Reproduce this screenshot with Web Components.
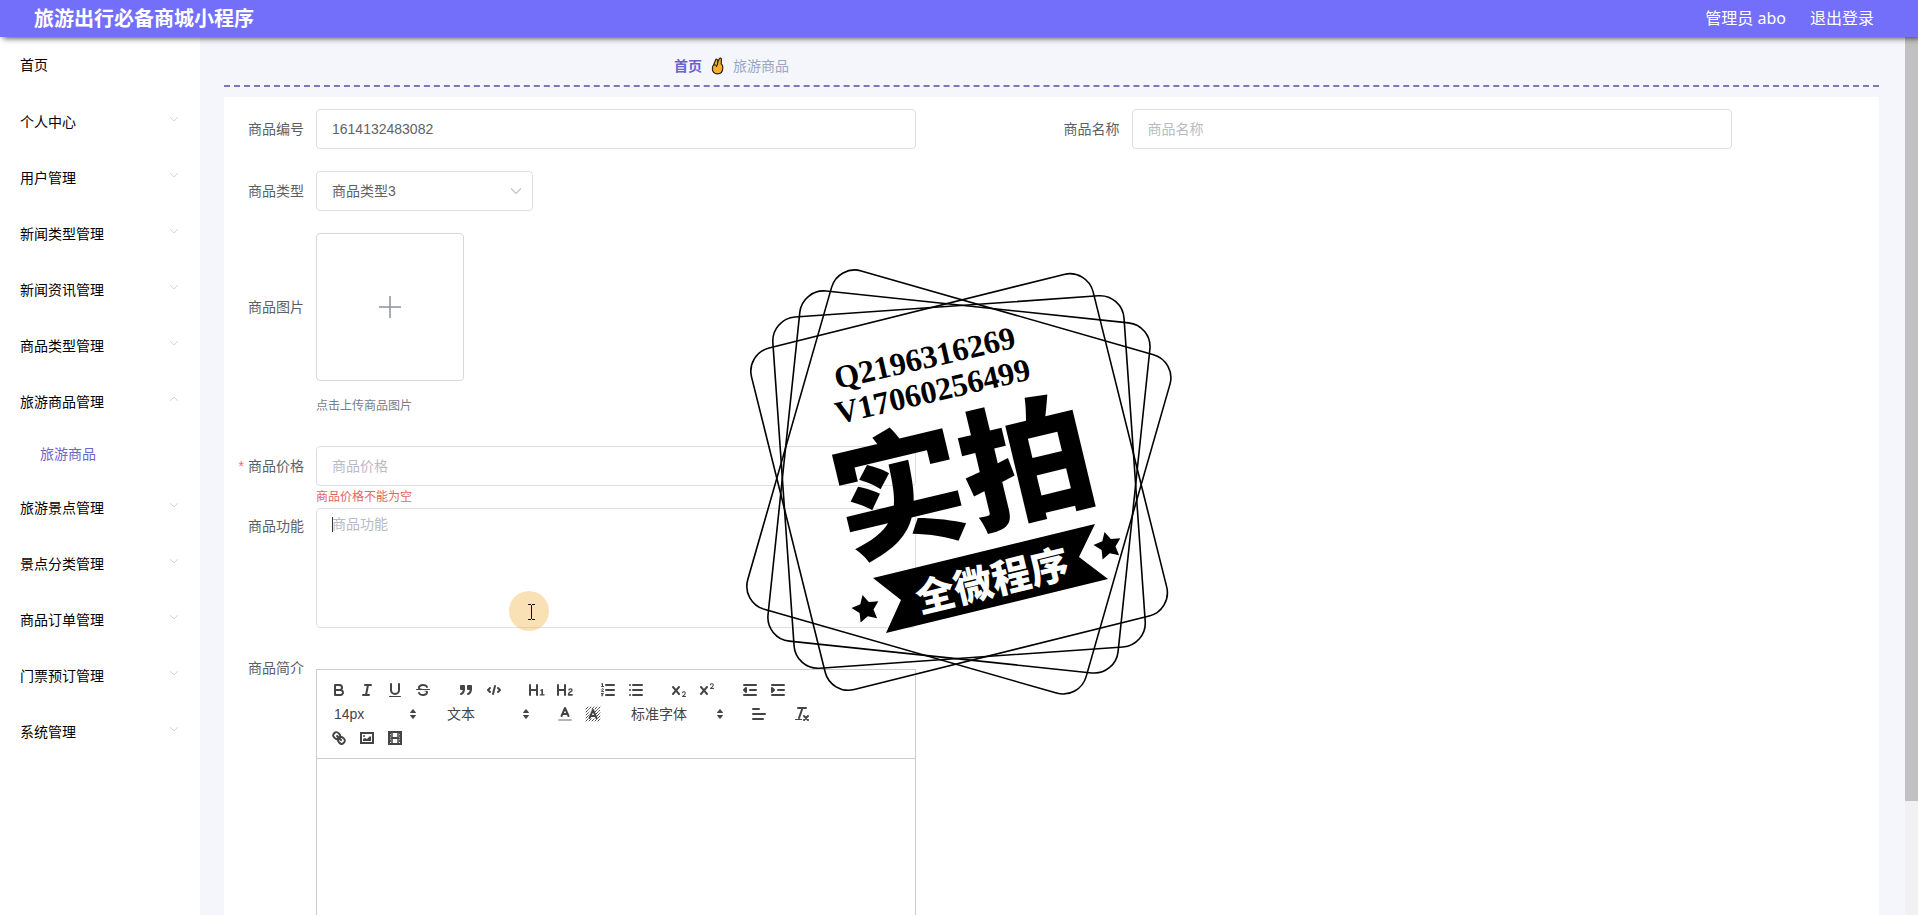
<!DOCTYPE html>
<html lang="zh-CN">
<head>
<meta charset="utf-8">
<title>旅游出行必备商城小程序</title>
<style>
  html, body { margin: 0; height: 100%; }
  body {
    font: 14px/20px "Liberation Sans", "Noto Sans CJK SC", sans-serif;
    color: #000;
    background: #f5f6fb;
    overflow: hidden;
  }
</style>
</head>
<body>
<admin-shell></admin-shell>

<template id="t-shell">
  <style>
    :host { display: grid; grid-template: auto minmax(0, 1fr) / 200px minmax(0, 1fr) auto; height: 100vh; position: relative; overflow: hidden; }
    app-header { grid-column: 1 / -1; z-index: 1; }
    main { padding: 10px 26px 0 24px; overflow: hidden; }
  </style>
  <app-header name="旅游出行必备商城小程序"></app-header>
  <side-menu>
    <menu-item label="首页" leaf></menu-item>
    <menu-item label="个人中心"></menu-item>
    <menu-item label="用户管理"></menu-item>
    <menu-item label="新闻类型管理"></menu-item>
    <menu-item label="新闻资讯管理"></menu-item>
    <menu-item label="商品类型管理"></menu-item>
    <menu-item label="旅游商品管理" open><sub-item>旅游商品</sub-item></menu-item>
    <menu-item label="旅游景点管理"></menu-item>
    <menu-item label="景点分类管理"></menu-item>
    <menu-item label="商品订单管理"></menu-item>
    <menu-item label="门票预订管理"></menu-item>
    <menu-item label="系统管理"></menu-item>
  </side-menu>
  <main>
    <bread-crumb></bread-crumb>
    <product-form></product-form>
  </main>
  <scroll-track></scroll-track>
  <stamp-mark></stamp-mark>
</template>

<template id="t-header">
  <style>
    :host { display: flex; justify-content: space-between; align-items: center; height: 37px; padding: 0 44px 0 34px; background: #736ffa; color: #fff; box-shadow: 3px 1px 6px rgba(0,0,0,.75); font-family: "Noto Sans", "Noto Sans CJK SC", sans-serif; }
    h1 { margin: 0; font-size: 20px; line-height: 36px; font-weight: 700; }
    div { display: flex; gap: 24px; padding-bottom: 2px; font-size: 16px; line-height: 34px; }
    a { color: inherit; text-decoration: none; }
  </style>
  <h1></h1>
  <div><span>管理员 abo</span><a href="#logout">退出登录</a></div>
</template>

<template id="t-side">
  <style>
    :host { display: block; background: #fff; overflow: hidden; }
  </style>
  <nav><slot></slot></nav>
</template>

<template id="t-item">
  <style>
    :host { display: block; }
    button { display: flex; justify-content: space-between; align-items: center; width: 100%; height: 56px; padding: 0 20px; border: 0; background: none; font: inherit; color: #000; text-align: left; }
    :host([leaf]) button { height: 57px; padding-bottom: 2px; }
    svg { width: 12px; height: 12px; margin-bottom: 6px; fill: none; stroke: #d4d6da; }
    :host([open]) svg { transform: rotate(180deg); }
    :host([leaf]) svg { display: none; }
  </style>
  <button type="button"><span></span><svg viewBox="0 0 12 12"><path d="M2 4l4 4 4-4"/></svg></button>
  <slot></slot>
</template>

<template id="t-sub">
  <style>
    :host { display: block; }
    a { display: block; padding: 0 0 2px 40px; line-height: 48px; color: #6f66c4; text-decoration: none; }
  </style>
  <a href="#goods"><slot></slot></a>
</template>

<template id="t-crumb">
  <style>
    :host { display: block; border-bottom: 2px dashed #7b78b2; margin-bottom: 10px; padding-left: 450px; }
    nav { display: flex; align-items: center; gap: 9px; height: 38px; }
    a { color: #6a62cf; font-weight: 700; text-decoration: none; }
    span { color: #97a8be; }
    svg { width: 13px; height: 18px; }
  </style>
  <nav aria-label="breadcrumb">
    <a href="#home">首页</a>
    <svg viewBox="0 0 13 18" fill="#f7ae2b" stroke="#2d2316" stroke-width="1.2" stroke-linejoin="round"><path d="M2.600 8L4.600 3c.5-1.300 2-.9 2 .4l.2 1.700L8.300 1.800c.6-1.300 2.300-.6 2.100.7L10.200 7c1.300.6 1.700 1.800 1.600 3.700-.1 3.900-1.500 6.100-5.200 6.100-3.600 0-5.200-2-5.200-5C1.400 9.800 1.400 8.600 2.600 8z"/><path d="M2.600 8c2-.6 3 .3 3 2M6.800 5L6.400 8.500" fill="none"/></svg>
    <span>旅游商品</span>
  </nav>
</template>

<template id="t-row">
  <style>
    :host { display: flex; margin-bottom: 22px; color: #5c5f66; }
    .label { flex: none; box-sizing: border-box; width: 80px; height: 40px; padding-right: 12px; line-height: 40px; text-align: right; white-space: nowrap; }
    :host([kind=upload]) .label { height: 148px; line-height: 148px; }
    :host([kind=tall]) .label { line-height: 36px; }
    :host([required]) .label::before { content: "*"; color: #f56c6c; margin-right: 4px; }
    :host([error]) { margin-bottom: 0; }
    .content { flex: 1; min-width: 0; }
    .error { display: none; font-size: 12px; line-height: 22px; color: #e26464; }
    :host([error]) .error { display: block; }
  </style>
  <div class="label"><slot name="label"></slot></div>
  <div class="content"><slot></slot><div class="error" role="alert"></div></div>
</template>

<template id="t-form">
  <style>
    :host { display: block; background: #fff; padding: 12px; }
    form { display: grid; grid-template-columns: 1fr 1fr; }
    form-row { grid-column: 1; }
    form-row.second { grid-column: 2; }
    input, textarea, select { display: block; box-sizing: border-box; width: 600px; max-width: 100%; height: 40px; margin: 0; padding: 0 15px; border: 1px solid #dcdfe6; border-radius: 4px; background: #fff; font: inherit; color: #606266; outline: none; appearance: none; }
    textarea { height: 120px; padding: 5px 15px; line-height: 21px; resize: none; }
    ::placeholder { color: #b8bbc2; opacity: 1; }
    .select { position: relative; width: 217px; }
    .select svg { position: absolute; right: 11px; top: 14px; width: 12px; height: 12px; fill: none; stroke: #c0c4cc; stroke-width: 1.2; pointer-events: none; }
    .upload { display: flex; align-items: center; justify-content: center; width: 148px; height: 148px; padding: 0; border: 1px solid #d5d7dc; border-radius: 4px; background: #fff; }
    .upload svg { width: 24px; height: 24px; stroke: #8c939d; stroke-width: 1.500; }
    .hint { padding: 8px 0 1px; font-size: 12px; line-height: 34px; color: #75808f; }
    .area { position: relative; width: 600px; max-width: 100%; }
    .caret { position: absolute; left: 16px; top: 9px; width: 1px; height: 15px; background: #333; }
    .pointer { position: absolute; left: 193px; top: 83px; width: 40px; height: 40px; }
  </style>
  <form>
    <form-row>
      <label slot="label" for="code">商品编号</label>
      <input id="code" type="text" value="1614132483082">
    </form-row>
    <form-row class="second">
      <label slot="label" for="name">商品名称</label>
      <input id="name" type="text" placeholder="商品名称">
    </form-row>
    <form-row>
      <label slot="label" for="kind">商品类型</label>
      <div class="select">
        <select id="kind"><option>商品类型3</option></select>
        <svg viewBox="0 0 12 12"><path d="M1 3.500l5 5 5-5"/></svg>
      </div>
    </form-row>
    <form-row kind="upload">
      <label slot="label" for="photo">商品图片</label>
      <button class="upload" id="photo" type="button"><svg viewBox="0 0 24 24"><path d="M12 1v22M1 12h22"/></svg></button>
      <div class="hint">点击上传商品图片</div>
    </form-row>
    <form-row required error="商品价格不能为空">
      <label slot="label" for="price">商品价格</label>
      <input id="price" type="text" placeholder="商品价格">
    </form-row>
    <form-row kind="tall">
      <label slot="label" for="feature">商品功能</label>
      <div class="area">
        <textarea id="feature" placeholder="商品功能"></textarea>
        <span class="caret"></span>
        <svg class="pointer" viewBox="0 0 40 40"><circle cx="20" cy="20" r="20" fill="#f3b74f" fill-opacity=".42"/><path d="M19 13.500h3M23 13.500h3M19 28.500h3M23 28.500h3M22.500 14v14" fill="none" stroke="#111"/></svg>
      </div>
    </form-row>
    <form-row kind="tall">
      <span slot="label">商品简介</span>
      <rich-editor></rich-editor>
    </form-row>
  </form>
</template>

<template id="t-editor">
  <style>
    :host { display: block; width: 600px; max-width: 100%; margin-top: 19px; }
    .bar { display: flex; flex-wrap: wrap; padding: 8px; border: 1px solid #ccc; }
    .group { display: flex; margin-right: 15px; }
    .body { height: 320px; border: 1px solid #ccc; border-top: 0; padding: 12px 15px; outline: none; }
    select { appearance: none; box-sizing: border-box; width: 98px; height: 24px; border: 0; padding: 0 9px; background: none; font: inherit; color: #444; }
    .pick { display: grid; align-items: center; }
    .pick > * { grid-area: 1 / 1; }
    .pick svg { justify-self: end; width: 18px; height: 18px; margin-right: 1px; fill: #444; pointer-events: none; }
    .wide select { width: 108px; }
  </style>
  <div class="bar" role="toolbar"></div>
  <div class="body" contenteditable="true" role="textbox" aria-label="商品简介"></div>
</template>

<template id="t-tool">
  <style>
    :host { display: block; }
    button { display: block; width: 28px; height: 24px; padding: 3px 5px; border: 0; background: none; }
    svg { display: block; width: 18px; height: 18px; }
    .s { fill: none; stroke: #444; stroke-linecap: round; stroke-linejoin: round; stroke-width: 2; }
    .m { stroke-miterlimit: 10; stroke-linejoin: miter; }
    .t { stroke-width: 1; }
    .f, .sf { fill: #444; }
    .sf { stroke: #444; stroke-linecap: round; stroke-linejoin: round; stroke-width: 2; }
    .e { fill-rule: evenodd; }
    .tr { opacity: .4; }
  </style>
  <button type="button"></button>
</template>

<template id="t-scroll">
  <style>
    :host { display: block; width: 13px; background: #f1f1f1; }
    div { height: 87%; background: #c1c1c1; }
  </style>
  <div></div>
</template>

<template id="t-stamp">
  <style>
    :host { display: block; position: absolute; top: 250px; left: 50%; width: 460px; height: 460px; margin-left: -229px; pointer-events: none; z-index: 2; }
    svg { display: block; width: 460px; height: 460px; }
    .num { font: 700 32px "Liberation Serif", serif; }
    .big { font: 900 131px "Noto Sans CJK SC", sans-serif; text-anchor: middle; }
    .small { font: 900 39px "Noto Sans CJK SC", sans-serif; fill: #fff; text-anchor: middle; }
  </style>
  <svg viewBox="0 0 460 460">
    <g fill="none" stroke="#000" stroke-width="1.600">
      <rect x="53" y="56" width="352" height="352" rx="24" transform="rotate(16 229 231.500)"/>
      <rect x="53" y="56" width="352" height="352" rx="24" transform="rotate(-14 229 231.500)"/>
      <rect x="53" y="56" width="352" height="352" rx="24" transform="rotate(-4 229 231.500)"/>
      <rect x="53" y="56" width="352" height="352" rx="24" transform="rotate(6 229 231.500)"/>
    </g>
    <text class="num" transform="translate(107 139) rotate(-13)">Q2196316269</text>
    <text class="num" transform="translate(108 174) rotate(-13)">V17060256499</text>
    <text class="big" transform="translate(233 228) rotate(-13.500)" y="48">实拍</text>
    <path d="M143 328L365 274L349 307L378 329L156 383L171 350z"/>
    <text class="small" transform="translate(262 330) rotate(-13.700)" y="15">全微程序</text>
    <g>
      <path transform="translate(136 359)" d="M-3.500-14.100L2.800-7L12.300-7.700L7.500.5L11.100 9.300L1.800 7.300L-5.400 13.400L-6.400 4L-14.500-1L-5.700-4.800z"/>
      <path transform="translate(378 296)" d="M-3.500-14.100L2.800-7L12.300-7.700L7.500.5L11.100 9.300L1.800 7.300L-5.400 13.400L-6.400 4L-14.500-1L-5.700-4.800z"/>
    </g>
  </svg>
</template>

<script>
  const stamp = (host, id) => {
    const root = host.attachShadow({ mode: 'open' });
    root.append(document.getElementById(id).content.cloneNode(true));
    return root;
  };
  const define = (name, id, setup) => customElements.define(name, class extends HTMLElement {
    connectedCallback() {
      if (this.shadowRoot) return;
      const root = stamp(this, id);
      if (setup) setup(this, root);
    }
  });

  const icons = {
    bold: '<path class="s" d="M5,4H9.5A2.5,2.5,0,0,1,12,6.500v0A2.5,2.5,0,0,1,9.500,9H5V4ZM5,9h5.500A2.5,2.5,0,0,1,13,11.500v0A2.5,2.5,0,0,1,10.500,14H5V9Z"/>',
    italic: '<path class="s" d="M7 4h6M5 14h6M8 14l2-10"/>',
    underline: '<path class="s" d="M5,3V9a4.012,4.012,0,0,0,4,4H9a4.012,4.012,0,0,0,4-4V3"/><rect class="f" height="1" rx=".5" width="12" x="3" y="15"/>',
    strike: '<path class="s t" d="M15.500 8.500h-13"/><path class="f" d="M9.007,8C6.542,7.791,6,7.519,6,6.500,6,5.792,7.283,5,9,5c1.571,0,2.765.679,2.969,1.309a1,1,0,0,0,1.900-.617C13.356,4.106,11.354,3,9,3,6.200,3,4,4.538,4,6.500a3.200,3.200,0,0,0,.5,1.843ZM8.984,10C11.457,10.208,12,10.479,12,11.500c0,.708-1.283,1.500-3,1.500-1.571,0-2.765-.679-2.969-1.309a1,1,0,1,0-1.900.617C4.644,13.894,6.646,15,9,15c2.800,0,5-1.538,5-3.500a3.200,3.200,0,0,0-.5-1.843Z"/>',
    quote: '<rect class="sf" height="3" width="3" x="4" y="5"/><rect class="sf" height="3" width="3" x="11" y="5"/><path class="sf e" d="M7,8c0,4.031-3,5-3,5"/><path class="sf e" d="M14,8c0,4.031-3,5-3,5"/>',
    code: '<path class="s" d="M5 7L3 9l2 2M13 7l2 2-2 2M10 5L8 13"/>',
    h1: '<path class="f" d="M10,4V14a1,1,0,0,1-2,0V10H3v4a1,1,0,0,1-2,0V4A1,1,0,0,1,3,4V8H8V4a1,1,0,0,1,2,0Zm6.068,9.209H14.982V8.594a.542.542,0,0,0-.605-.605.622.622,0,0,0-.308.033,1.732,1.732,0,0,1-.957.500c-.6.100-1,.2-1,.7a.600.600,0,0,0,.5.600h.770v3.387h-1.100a.605.605,0,1,0,0,1.200h3.785a.605.605,0,1,0,0-1.200Z"/>',
    h2: '<path class="f" d="M16.737,13.975a.697.697,0,0,1-.710.700H12.500a1.300,1.300,0,0,1-.7-1.200c0-1.400,1-2.200,2-2.900.9-.6,1.500-.900,1.500-1.500a.75.75,0,0,0-.8-.7c-.6,0-.8.400-1,.8a.7.7,0,0,1-1.300-.4A2.200,2.200,0,0,1,14.500,7.200a2,2,0,0,1,2.200,1.900c0,1.200-.9,1.800-1.900,2.500-.6.400-1.200.8-1.400,1.300H16A.7.7,0,0,1,16.737,13.975ZM9,3A.999.999,0,0,0,8,4V8H3V4A1,1,0,0,0,1,4V14a1,1,0,0,0,2,0V10H8v4a1,1,0,0,0,2,0V4A1,1,0,0,0,9,3Z"/>',
    ordered: '<path class="s" d="M7 4h8M7 9h8M7 14h8"/><path class="s t" d="M2.500 5.500h2M3.500 5.500v-3l-1 .5M4.500 10.500h-2c0-1.500 1.850-1 1.850-2.234 0-.8-1.350-1-1.850-.234M2.500 14.850a.959.959,0,1,0,.2-1.800M2.500 12.500h1.800"/>',
    bullet: '<path class="s" d="M6 4h9M6 9h9M6 14h9M3 4h0M3 9h0M3 14h0"/>',
    sub: '<path class="f" d="M15.500,15H13.861a3.858,3.858,0,0,0,1.914-2.975,1.800,1.800,0,0,0-1.600-1.751A1.921,1.921,0,0,0,12.021,11.700a.5.5,0,1,0,.957.291h0a.914.914,0,0,1,1.053-.725.810.810,0,0,1,.744.762c0,1.076-1.170,1.869-1.936,2.430A1.456,1.456,0,0,0,12,15.500a.5.5,0,0,0,.5.500h3A.5.5,0,0,0,15.500,15Z"/><path class="f" d="M9.650,5.241a1,1,0,0,0-1.409.108L6,7.964,3.759,5.349A1,1,0,0,0,2.192,6.590l.049.061L4.684,9.500,2.241,12.349A1,1,0,0,0,3.710,13.707l.049-.056L6,11.036l2.241,2.614a1,1,0,1,0,1.567-1.240l-.049-.061L7.316,9.500,9.759,6.651A1,1,0,0,0,9.650,5.241Z"/>',
    sup: '<path class="f" d="M15.500,7H13.861a4.015,4.015,0,0,0,1.914-2.975,1.800,1.800,0,0,0-1.600-1.751A1.922,1.922,0,0,0,12.021,3.700a.5.5,0,1,0,.957.291.917.917,0,0,1,1.053-.725.810.810,0,0,1,.744.762c0,1.077-1.164,1.925-1.934,2.486A1.423,1.423,0,0,0,12,7.500a.5.5,0,0,0,.5.500h3A.5.5,0,0,0,15.500,7Z"/><path class="f" d="M9.651,5.241a1,1,0,0,0-1.410.108L6,7.964,3.759,5.349a1,1,0,1,0-1.519,1.300L4.683,9.500,2.241,12.349a1,1,0,1,0,1.519,1.300L6,11.036,8.241,13.650a1,1,0,0,0,1.519-1.300L7.317,9.500,9.759,6.651A1,1,0,0,0,9.651,5.241Z"/>',
    outdent: '<path class="s" d="M3 14h12M3 4h12M9 9h6"/><path class="sf" d="M5 7v4L3 9z"/>',
    indent: '<path class="s" d="M3 14h12M3 4h12M9 9h6"/><path class="sf" d="M3 7v4L5 9z"/>',
    color: '<path class="s tr" d="M3 15h12"/><path class="s" d="M5.500 11L9 3l3.500 8M11.630 9H6.380"/>',
    mark: '<path class="s t" stroke-dasharray="1 1" d="M2 4L4 2M2 7L7 2M2 10L5 7M2 13L5 10M2 16L4 14M5 16L7 14M8 16L10 14M11 16L16 11M14 16L16 14M13 11L16 8M12 9L16 5M11 7L16 2M11 4L13 2M8 4L10 2"/><path class="s" d="M5.500 13L9 5l3.500 8M11.630 11H6.380"/>',
    align: '<path class="s" d="M3 9h12M3 14h10M3 4h6"/>',
    clean: '<path class="s" d="M5 3h8M6 13l3.500-10"/><path class="s" d="M11 11l4 4M15 11l-4 4"/><rect class="f" height="1" rx=".5" width="7" x="2" y="14"/>',
    link: '<path class="s" d="M7 7l4 4"/><path class="s e" d="M8.900,4.577a3.476,3.476,0,0,1,.36,4.679A3.476,3.476,0,0,1,4.577,8.900C3.185,7.500,2.035,6.400,4.217,4.217S7.500,3.185,8.900,4.577Z"/><path class="s e" d="M13.423,9.100a3.476,3.476,0,0,0-4.679-.36,3.476,3.476,0,0,0,.36,4.679c1.392,1.392,2.500,2.542,4.679.36S14.815,10.500,13.423,9.100Z"/>',
    image: '<rect class="s m" height="10" width="12" x="3" y="4"/><path class="f" d="M5 12v-2l2-1 2 1 3-3 1 1v4z"/><circle class="f" cx="6" cy="7" r="1"/>',
    video: '<rect class="s m" height="12" width="12" x="3" y="3"/><path class="s m" style="stroke-width:1.500" d="M6 3v12M12 3v12"/><path class="s m" d="M6 9h6"/><path class="s t" stroke-dasharray="1 1.500" d="M4.500 4v10M13.500 4v10"/>'
  };
  const arrows = '<svg viewBox="0 0 18 18"><path d="M9 4.500l2.500 3h-5zM9 13.500l2.500-3h-5z" stroke="#444" stroke-linejoin="round"/></svg>';
  const groups = [
    ['bold', 'italic', 'underline', 'strike'], ['quote', 'code'], ['h1', 'h2'], ['ordered', 'bullet'],
    ['sub', 'sup'], ['outdent', 'indent'], { label: '字号', text: '14px' }, { label: '标题', text: '文本' },
    ['color', 'mark'], { label: '字体', text: '标准字体', wide: true }, ['align'], ['clean'], ['link', 'image', 'video']
  ];

  define('tool-button', 't-tool', (el, root) => {
    const b = root.querySelector('button');
    b.setAttribute('aria-label', el.getAttribute('icon'));
    b.innerHTML = `<svg viewBox="0 0 18 18">${icons[el.getAttribute('icon')]}</svg>`;
  });
  define('rich-editor', 't-editor', (el, root) => {
    root.querySelector('.bar').innerHTML = groups.map(g => Array.isArray(g)
      ? `<div class="group">${g.map(i => `<tool-button icon="${i}"></tool-button>`).join('')}</div>`
      : `<div class="group pick${g.wide ? ' wide' : ''}"><select aria-label="${g.label}"><option>${g.text}</option></select>${arrows}</div>`).join('');
  });
  define('form-row', 't-row', (el, root) => {
    root.querySelector('.error').textContent = el.getAttribute('error') || '';
  });
  define('product-form', 't-form');
  define('bread-crumb', 't-crumb');
  define('sub-item', 't-sub');
  define('menu-item', 't-item', (el, root) => {
    root.querySelector('span').textContent = el.getAttribute('label');
  });
  define('side-menu', 't-side');
  define('app-header', 't-header', (el, root) => {
    root.querySelector('h1').textContent = el.getAttribute('name');
  });
  define('scroll-track', 't-scroll');
  define('stamp-mark', 't-stamp');
  define('admin-shell', 't-shell');
</script>
</body>
</html>
